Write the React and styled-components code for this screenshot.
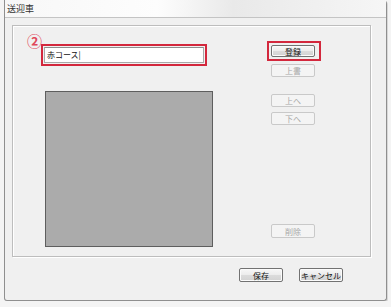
import React from 'react'
import styled, { createGlobalStyle } from 'styled-components'

const Global = createGlobalStyle`
  html, body {
    margin: 0;
    background: #f4f4f4;
    font-family: "Noto Sans CJK JP", "Noto Sans", sans-serif;
  }
`

const Window = styled.div`
  margin-left: 4px;
  width: 381px;
  height: 300px;
  border: 1px solid #8f8f8f;
  border-top: none;
  border-radius: 0 4px 3px 3px;
  background: #f0f0f0;
  display: flex;
  flex-direction: column;
  box-shadow: 1px 1px 0 #d8d8d8;
`

const TitleBar = styled.div`
  height: 17px;
  display: flex;
  align-items: center;
  padding-left: 2px;
  font-size: 9px;
  color: #333;
  background: linear-gradient(90deg, #f7f7f7 0%, #fdfdfd 40%, #e9e9e9 60%, #f6f6f6 100%);
  border-bottom: 1px solid #c4c4c4;
`

const Client = styled.div`
  flex: 1;
  padding: 7px 0 0 7px;
  display: flex;
  flex-direction: column;
`

const Panel = styled.div`
  position: relative;
  width: 359px;
  height: 232px;
  border: 1px solid #bdbdbd;
  box-shadow: inset 1px 1px 0 #fff, 1px 1px 0 #fff;
  display: flex;
  padding: 18px 0 0 31px;
  box-sizing: border-box;
`

const LeftCol = styled.div`
  width: 168px;
  margin-top: 3px;
  display: flex;
  flex-direction: column;
`

const Field = styled.div`
  position: relative;
  width: 160px;
  height: 16px;
`

const Input = styled.div`
  box-sizing: border-box;
  width: 100%;
  height: 100%;
  background: #fff;
  border: 1px solid #a9a9a9;
  border-top-color: #8e8e8e;
  font-size: 8px;
  line-height: 14px;
  padding-left: 2px;
  color: #111;
  white-space: nowrap;
`

const Highlight = styled.div`
  position: absolute;
  top: ${p => p.$t}px;
  left: ${p => p.$l}px;
  right: ${p => p.$r}px;
  bottom: ${p => p.$b}px;
  border: 2px solid #d3283d;
  pointer-events: none;
`

const Marker = styled.span`
  position: absolute;
  left: -17px;
  top: -14px;
  font-size: 15px;
  line-height: 15px;
  color: #e0485a;
  font-weight: bold;
`

const Preview = styled.div`
  margin-top: 28px;
  margin-left: 1px;
  width: 168px;
  height: 156px;
  box-sizing: border-box;
  background: #ababab;
  border: 1px solid #5e5e5e;
`

const RightCol = styled.div`
  margin-left: 59px;
  display: flex;
  flex-direction: column;
`

const Button = styled.div`
  position: relative;
  box-sizing: border-box;
  width: ${p => p.$w || 44}px;
  height: ${p => p.$h || 13}px;
  margin-top: ${p => p.$mt || 0}px;
  border: 1px solid ${p => (p.$disabled ? '#c9c9c9' : '#727272')};
  border-radius: 2px;
  background: ${p =>
    p.$disabled
      ? '#f4f4f4'
      : 'linear-gradient(#f7f7f7 0%, #ececec 50%, #dcdcdc 51%, #d2d2d2 100%)'};
  box-shadow: ${p => (p.$disabled ? 'none' : 'inset 0 0 0 1px #fbfbfb')};
  color: ${p => (p.$disabled ? '#a8a8a8' : '#111')};
  font-size: 8px;
  display: flex;
  align-items: center;
  justify-content: center;
`

const Footer = styled.div`
  display: flex;
  gap: 16px;
  margin: 11px 0 0 227px;
`

export default function App() {
  return (
    <>
      <Global />
      <Window>
        <TitleBar>送迎車</TitleBar>
        <Client>
          <Panel>
            <LeftCol>
              <Field>
                <Input>赤コース|</Input>
                <Highlight $t={-3} $l={-3} $r={-3} $b={-3} />
                <Marker>②</Marker>
              </Field>
              <Preview />
            </LeftCol>
            <RightCol>
              <Button $h={12} $mt={1}>
                登録
                <Highlight $t={-5} $l={-5} $r={-7} $b={-5} />
              </Button>
              <Button $disabled $mt={7}>上書</Button>
              <Button $disabled $mt={17}>上へ</Button>
              <Button $disabled $mt={5}>下へ</Button>
              <Button $disabled $mt={99} $h={14}>削除</Button>
            </RightCol>
          </Panel>
          <Footer>
            <Button $h={14}>保存</Button>
            <Button $h={14}>キャンセル</Button>
          </Footer>
        </Client>
      </Window>
    </>
  )
}
